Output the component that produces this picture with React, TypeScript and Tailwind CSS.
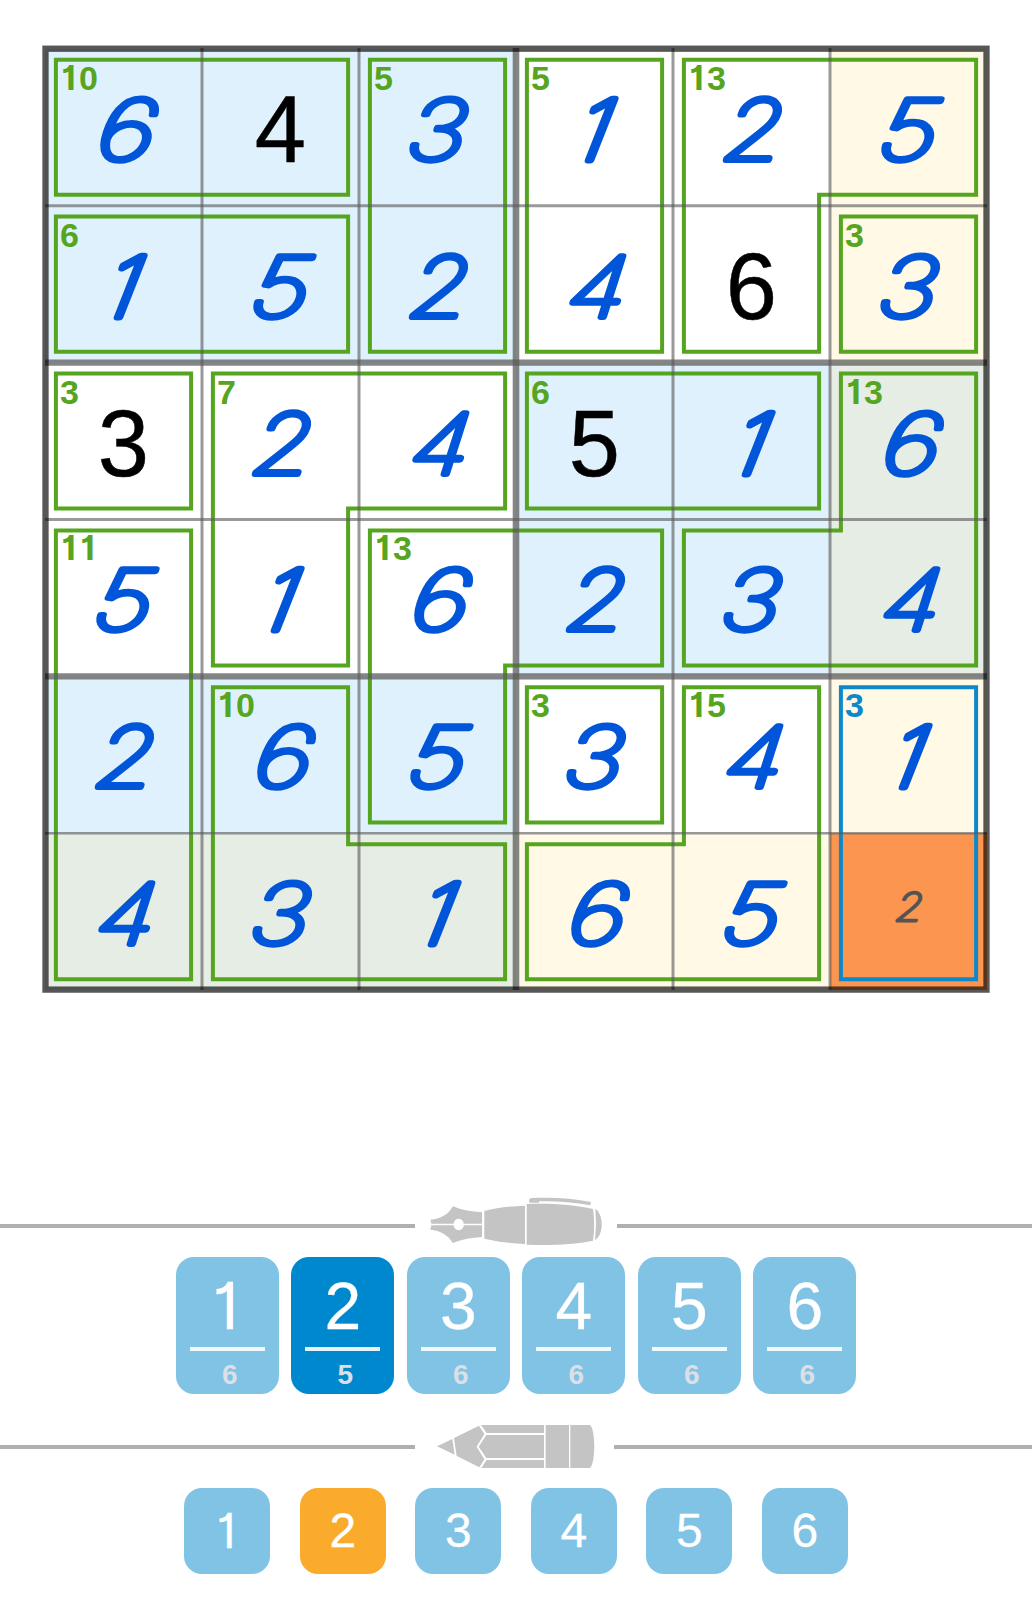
import clsx from "clsx";

const CELL_W = 157;
const CELL_H = 156.9;

const CELL_BG: Record<string, string> = {
  w: "bg-white",
  b: "bg-[#dff1fd]",
  y: "bg-[#fff9e6]",
  g: "bg-[#e6ede4]",
  o: "bg-[#fb9550]",
};

const SHADES = ["bbbwwy", "bbbwwy", "wwwbbg", "wwwbbg", "bbbwwy", "gggyyo"];
const DIGITS = ["643125", "152463", "324516", "516234", "265341", "431652"];
const GIVENS = ["0-1", "1-4", "2-0", "2-3"];
const NOTES = ["5-5"];

// corner indexes: 2k is the inner start of cell k, 2k + 1 its inner end
const CAGES: { sum: string; pts: number[][]; active?: boolean }[] = [
  { sum: "10", pts: [[0, 0], [3, 0], [3, 1], [0, 1]] },
  { sum: "5", pts: [[4, 0], [5, 0], [5, 3], [4, 3]] },
  { sum: "5", pts: [[6, 0], [7, 0], [7, 3], [6, 3]] },
  { sum: "13", pts: [[8, 0], [11, 0], [11, 1], [9, 1], [9, 3], [8, 3]] },
  { sum: "6", pts: [[0, 2], [3, 2], [3, 3], [0, 3]] },
  { sum: "3", pts: [[10, 2], [11, 2], [11, 3], [10, 3]] },
  { sum: "3", pts: [[0, 4], [1, 4], [1, 5], [0, 5]] },
  { sum: "7", pts: [[2, 4], [5, 4], [5, 5], [3, 5], [3, 7], [2, 7]] },
  { sum: "6", pts: [[6, 4], [9, 4], [9, 5], [6, 5]] },
  { sum: "13", pts: [[10, 4], [11, 4], [11, 7], [8, 7], [8, 6], [10, 6]] },
  { sum: "11", pts: [[0, 6], [1, 6], [1, 11], [0, 11]] },
  { sum: "13", pts: [[4, 6], [7, 6], [7, 7], [5, 7], [5, 9], [4, 9]] },
  { sum: "10", pts: [[2, 8], [3, 8], [3, 10], [5, 10], [5, 11], [2, 11]] },
  { sum: "3", pts: [[6, 8], [7, 8], [7, 9], [6, 9]] },
  { sum: "15", pts: [[8, 8], [9, 8], [9, 11], [6, 11], [6, 10], [8, 10]] },
  { sum: "3", pts: [[10, 8], [11, 8], [11, 11], [10, 11]], active: true },
];

const INSET = 10.9;
const edge = (i: number, size: number) =>
  i % 2 === 0 ? (i / 2) * size + INSET : ((i + 1) / 2) * size - INSET;

// x offset of the digit's middle, slant, horizontal stretch and nib width
const PEN: Record<string, { x: number; skew: number; sx: number; nib: number }> = {
  "1": { x: 72.3, skew: -12, sx: 1.1, nib: 7 },
  "2": { x: 78.5, skew: -6, sx: 1.15, nib: 6.2 },
  "3": { x: 75.3, skew: -6, sx: 1.22, nib: 5.9 },
  "4": { x: 78.8, skew: -7, sx: 1.18, nib: 6 },
  "5": { x: 76, skew: -7, sx: 1.25, nib: 5.9 },
  "6": { x: 79, skew: -7, sx: 1.25, nib: 5.9 },
};

function PenDigit({ digit }: { digit: string }) {
  const p = PEN[digit];
  return (
    <svg viewBox="0 0 157 157" className="size-[157px] shrink-0 overflow-visible">
      <text
        transform={`translate(${p.x} 110.7) skewX(${p.skew}) scale(${p.sx} 1)`}
        textAnchor="middle"
        className="fill-[#0055d8] stroke-[#0055d8] font-['Inter',sans-serif] text-[83.5px] font-thin italic"
        strokeWidth={p.nib}
        strokeLinejoin="round"
        strokeLinecap="round"
      >
        {digit}
      </text>
    </svg>
  );
}

function NoteDigit({ digit }: { digit: string }) {
  return (
    <svg viewBox="0 0 157 157" className="size-[157px] shrink-0 overflow-visible">
      <text
        transform="translate(78.2 87.8) skewX(-6) scale(1.12 1)"
        textAnchor="middle"
        className="fill-[#545454] stroke-[#545454] font-['Inter',sans-serif] text-[39px] font-thin italic"
        strokeWidth="2.8"
        strokeLinejoin="round"
      >
        {digit}
      </text>
    </svg>
  );
}

function Num({ value }: { value: string }) {
  return (
    <>
      {value.split("").map((ch, i) =>
        ch === "1" ? (
          <span key={i} className="inline-block w-[0.565em] -translate-x-[0.025em] text-center font-['Inter',sans-serif] text-[0.985em] leading-none [font-feature-settings:'cv01']">
            1
          </span>
        ) : (
          <span key={i}>{ch}</span>
        )
      )}
    </>
  );
}

function Cell({ row, col }: { row: number; col: number }) {
  const key = `${row}-${col}`;
  const digit = DIGITS[row][col];
  const cage = CAGES.find((c) => c.pts[0][0] === col * 2 && c.pts[0][1] === row * 2);

  return (
    <div className={clsx("relative flex items-start justify-center", CELL_BG[SHADES[row][col]])}>
      {GIVENS.includes(key) ? (
        <span className="mt-[2px] scale-x-[0.97] text-[95px] leading-[157px] text-black [-webkit-text-stroke:0.5px_black]">{digit}</span>
      ) : NOTES.includes(key) ? (
        <NoteDigit digit={digit} />
      ) : (
        <PenDigit digit={digit} />
      )}
      {cage && (
        <span className={clsx("absolute top-[12px] left-[15px] text-[34px] leading-[34px] font-bold whitespace-nowrap", cage.active ? "text-[#0d89c9]" : "text-[#56a520]")}>
          <Num value={cage.sum} />
        </span>
      )}
    </div>
  );
}

function Lines() {
  return (
    <svg viewBox="0 0 942 941" className="pointer-events-none absolute inset-0 h-full w-full overflow-visible" fill="none">
      {CAGES.map((c, i) => (
        <polygon
          key={i}
          points={c.pts.map(([x, y]) => `${edge(x, CELL_W)},${edge(y, CELL_H) - 0.2}`).join(" ")}
          stroke={c.active ? "#0d89c9" : "#56a520"}
          strokeWidth="4"
        />
      ))}
      {[1, 2, 3, 4, 5].map((i) => {
        const thick = i === 3;
        return <line key={i} x1={i * CELL_W} x2={i * CELL_W} y1="-1" y2="941" stroke="#5a5a5a" strokeOpacity={thick ? 0.74 : 0.62} strokeWidth={thick ? 6.6 : 3} />;
      })}
      {[1, 2, 3, 4, 5].map((i) => {
        const thick = i % 2 === 0;
        return <line key={i} x1="0" x2="942" y1={i * CELL_H - 0.2} y2={i * CELL_H - 0.2} stroke="#5a5a5a" strokeOpacity={thick ? 0.74 : 0.62} strokeWidth={thick ? 6.4 : i === 5 ? 2.4 : 3} />;
      })}
      <rect x="0.5" y="-0.3" width="941" height="940.9" stroke="#000" strokeOpacity="0.66" strokeWidth="6.3" />
    </svg>
  );
}

function PenIcon() {
  return (
    <svg viewBox="45 0 606 240" className="h-[80px] w-[202px] shrink-0" fill="#c4c4c4">
      <path d="M91 119 C120 118 146 103 159 79 C185 90 215 95 246 97 V131 H191 A15 15 0 0 0 161 131 H94 Z" />
      <path d="M94 136 H161 A15 15 0 0 0 191 136 H246 V171 C215 173 188 178 158 189 C146 166 120 151 91 149 Z" />
      <path d="M253 93 C292 83 333 78 375 77 V192 C333 190 292 185 253 176 Z" />
      <path d="M380 72 C450 69 520 74 579 87 Q586 135 579 182 C520 194 450 197 380 194 Z" />
      <path d="M586 86 C612 104 612 164 585 180 Q591 133 586 86 Z" />
      <path d="M387 59 Q388 54 396 54 C460 51 520 55 573 66 L571 76 C520 67 470 63 417 64 V68 H388 Z" />
    </svg>
  );
}

function PencilIcon() {
  return (
    <svg viewBox="45 0 597 270" className="h-[90px] w-[199px] shrink-0" fill="#c4c4c4">
      <path d="M111 139 L157 117 L164 164 Z" />
      <path d="M162 114 L237 77 L253 102 L230 140 L253 178 L238 202 L170 168 Z" />
      <path d="M243 75 H432 V99 H260 Z" />
      <path d="M259 105 H432 V174 H259 L236 140 Z" />
      <path d="M260 180 H432 V204 H244 Z" />
      <path d="M437 75 H507 V204 H437 Z" />
      <path d="M511 75 H570 C587 90 587 188 570 204 H511 Z" />
    </svg>
  );
}

const PEN_KEYS = [
  { digit: "1", used: 6 },
  { digit: "2", used: 5, active: true },
  { digit: "3", used: 6 },
  { digit: "4", used: 6 },
  { digit: "5", used: 6 },
  { digit: "6", used: 6 },
];

export default function App() {
  return (
    <div className="flex h-[1600px] w-[1032px] flex-col bg-white pt-[49px] font-['Liberation_Sans',Arial,sans-serif]">
      <div className="relative ml-[45px] grid h-[941px] w-[942px] shrink-0 grid-cols-6 grid-rows-6">
        {DIGITS.map((line, r) => line.split("").map((_, c) => <Cell key={`${r}-${c}`} row={r} col={c} />))}
        <Lines />
      </div>

      <div className="mt-[190px] flex h-[76.5px] shrink-0 items-start">
        <div className="mt-[44px] h-1 w-[415px] bg-[#b0b0b0]" />
        <PenIcon />
        <div className="mt-[44px] h-1 flex-1 bg-[#b0b0b0]" />
      </div>
      <div className="flex shrink-0 justify-center gap-[12.5px]">
        {PEN_KEYS.map((k) => (
          <button key={k.digit} className={clsx("flex h-[137px] w-[103px] flex-col items-center rounded-[18px]", k.active ? "bg-[#0088ce]" : "bg-[#80c3e5]")}>
            <span className="mt-[15.5px] h-[68px] text-[66px] leading-[68px] text-white [-webkit-text-stroke:0.3px_white]">
              <Num value={k.digit} />
            </span>
            <span className="mt-[6.5px] h-1 w-[75px] bg-white/90" />
            <span className="mt-[9px] ml-[5px] text-[28px] leading-[29px] font-bold text-[#dcdfe5]">{k.used}</span>
          </button>
        ))}
      </div>

      <div className="mt-[6.5px] flex h-[87.5px] shrink-0 items-start">
        <div className="mt-[45px] h-1 w-[415px] bg-[#b0b0b0]" />
        <PencilIcon />
        <div className="mt-[45px] h-1 flex-1 bg-[#b0b0b0]" />
      </div>
      <div className="flex shrink-0 justify-center gap-[29.5px]">
        {PEN_KEYS.map((k) => (
          <button key={k.digit} className={clsx("flex size-[86px] items-center justify-center rounded-[18px] text-[48px] leading-[50px] text-white [-webkit-text-stroke:0.3px_white]", k.active ? "bg-[#fbab2c]" : "bg-[#80c3e5]")}>
            <Num value={k.digit} />
          </button>
        ))}
      </div>
    </div>
  );
}
